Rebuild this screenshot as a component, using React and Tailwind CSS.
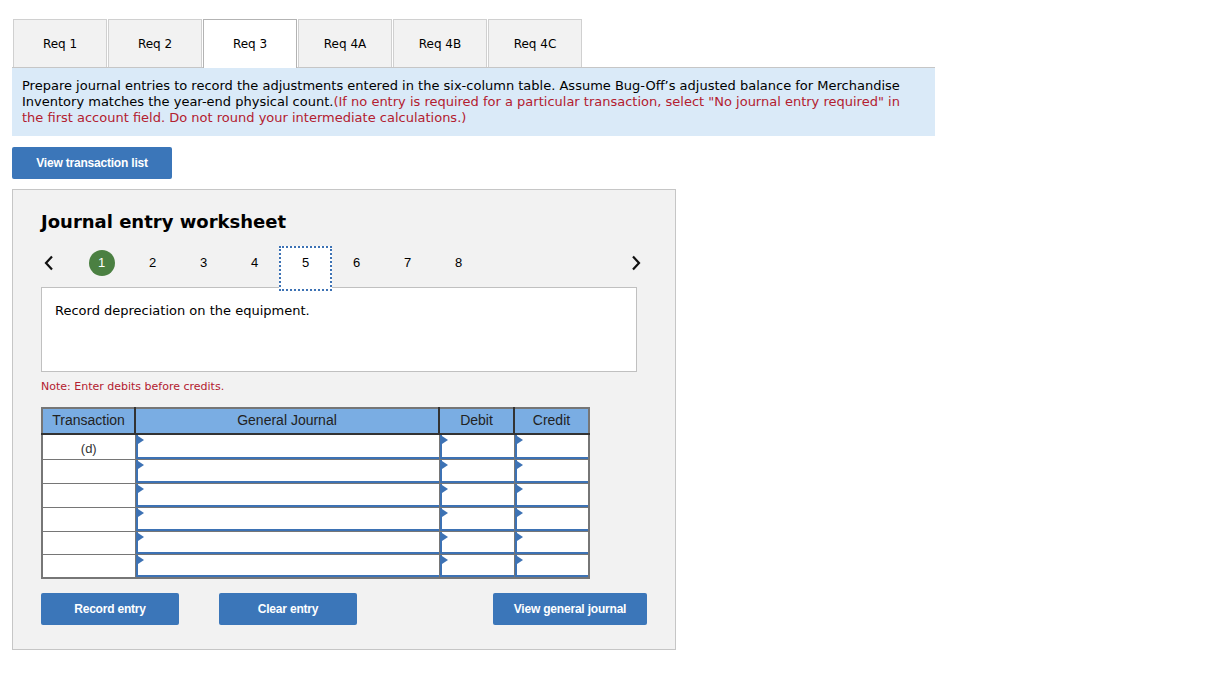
import React from "react";

const tabs = ["Req 1", "Req 2", "Req 3", "Req 4A", "Req 4B", "Req 4C"];
const steps = [1, 2, 3, 4, 5, 6, 7, 8];
const rows = ["(d)", "", "", "", "", ""];
const rowHeights = ["h-[26px]", "h-[24px]", "h-[24px]", "h-[24px]", "h-[23px]", "h-[23px]"];

const verdana = { fontFamily: "Verdana, 'DejaVu Sans', sans-serif" };
const arial = { fontFamily: "'Liberation Sans', Arial, sans-serif" };

const InputCell = ({ w }) => (
  <td className={`${w} p-0 relative bg-white border border-[#767676] align-top`}>
    <div className="absolute inset-0 border-l-2 border-b-2 border-[#3d72b4] bg-white">
      <span className="absolute left-0 top-[1px] w-0 h-0 border-y-[4px] border-y-transparent border-l-[6px] border-l-[#3d72b4]"></span>
    </div>
  </td>
);

const BlueButton = ({ children, className }) => (
  <button
    className={`h-[32px] bg-[#3b76b9] text-white text-[12px] font-bold rounded-[2px] tracking-[-0.2px] ${className}`}
    style={arial}
  >
    {children}
  </button>
);

const App = () => {
  return (
    <div className="w-[1217px] h-[678px] bg-white text-black" style={verdana}>
      <div className="pl-[12px] pt-[20px]">
        {/* tabs */}
        <div className="flex items-end gap-[1px] w-[923px] border-b border-[#c6c6c6] h-[48px]">
          {tabs.map((t, i) => (
            <div
              key={t}
              className={`w-[94px] flex items-center justify-center text-[12px] border border-b-0 ${
                i === 2
                  ? "bg-white border-[#b3b3b3] h-[49px] -mb-[1px]"
                  : "bg-[#f2f2f2] border-[#d0d0d0] h-[48px] pt-[1px]"
              } ${i === 0 ? "ml-[1px]" : ""}`}
            >
              {t}
            </div>
          ))}
        </div>

        {/* instructions */}
        <div className="w-[923px] h-[68px] bg-[#daeaf8] px-[10px] pt-[10px] text-[13px] leading-[16px]">
          Prepare journal entries to record the adjustments entered in the six-column table. Assume Bug-Off’s adjusted balance for Merchandise Inventory matches the year-end physical count.
          <span className="text-[#b3202f]">
            (If no entry is required for a particular transaction, select "No journal entry required" in the first account field. Do not round your intermediate calculations.)
          </span>
        </div>

        <BlueButton className="mt-[11px] w-[160px]">View transaction list</BlueButton>

        {/* worksheet */}
        <div className="mt-[10px] w-[664px] h-[461px] bg-[#f2f2f2] border border-[#c6c6c6] pl-[28px] pt-[18px]">
          <h2 className="text-[18px] font-bold">Journal entry worksheet</h2>

          <div className="flex items-center h-[46px] mt-[5px] relative">
            <svg width="10" height="16" viewBox="0 0 10 16" className="ml-[3px] shrink-0">
              <path d="M8 1.5 L2 8 L8 14.5" stroke="#111" strokeWidth="2.2" fill="none" />
            </svg>
            <div className="flex items-center ml-[22px]">
              {steps.map((s) => (
                <div key={s} className="w-[51px] shrink-0 flex justify-center text-[13px]" style={arial}>
                  {s === 1 ? (
                    <span className="w-[26px] h-[26px] shrink-0 rounded-full bg-[#4b8042] text-white flex items-center justify-center">
                      1
                    </span>
                  ) : s === 5 ? (
                    <span className="w-[53px] h-[45px] mt-[10px] shrink-0 bg-white border-2 border-dotted border-[#3d72b4] flex items-start justify-center pt-[5px]">
                      5
                    </span>
                  ) : (
                    <span>{s}</span>
                  )}
                </div>
              ))}
            </div>
            <svg width="10" height="16" viewBox="0 0 10 16" className="ml-auto mr-[34px] shrink-0">
              <path d="M2 1.5 L8 8 L2 14.5" stroke="#111" strokeWidth="2.2" fill="none" />
            </svg>
          </div>

          <div className="w-[596px] h-[85px] mt-[1px] bg-white border border-[#c0c0c0] px-[13px] pt-[13px] text-[13px]">
            Record depreciation on the equipment.
          </div>

          <p className="mt-[7px] text-[11px] text-[#b3202f]">Note: Enter debits before credits.</p>

          <table className="mt-[11px] border-collapse border-2 border-[#767676]" style={arial}>
            <thead>
              <tr className="h-[26px] bg-[#7aade3] text-[14px] text-[#222]">
                <th className="w-[93px] font-normal border-r-2 border-b-2 border-[#333]">Transaction</th>
                <th className="w-[304px] font-normal border-r-2 border-b-2 border-[#333]">General Journal</th>
                <th className="w-[75px] font-normal border-r-2 border-b-2 border-[#333]">Debit</th>
                <th className="w-[75px] font-normal border-b-2 border-[#333]">Credit</th>
              </tr>
            </thead>
            <tbody>
              {rows.map((r, i) => (
                <tr key={i} className={rowHeights[i]}>
                  <td className="bg-white border border-[#767676] text-center text-[13px] align-top pt-[4px] text-[#333]">
                    {r}
                  </td>
                  <InputCell w="w-[304px]" />
                  <InputCell w="w-[75px]" />
                  <InputCell w="w-[75px]" />
                </tr>
              ))}
            </tbody>
          </table>

          <div className="flex mt-[14px]">
            <BlueButton className="w-[138px]">Record entry</BlueButton>
            <BlueButton className="w-[138px] ml-[40px]">Clear entry</BlueButton>
            <BlueButton className="w-[154px] ml-[136px]">View general journal</BlueButton>
          </div>
        </div>
      </div>
    </div>
  );
};

export default App;
